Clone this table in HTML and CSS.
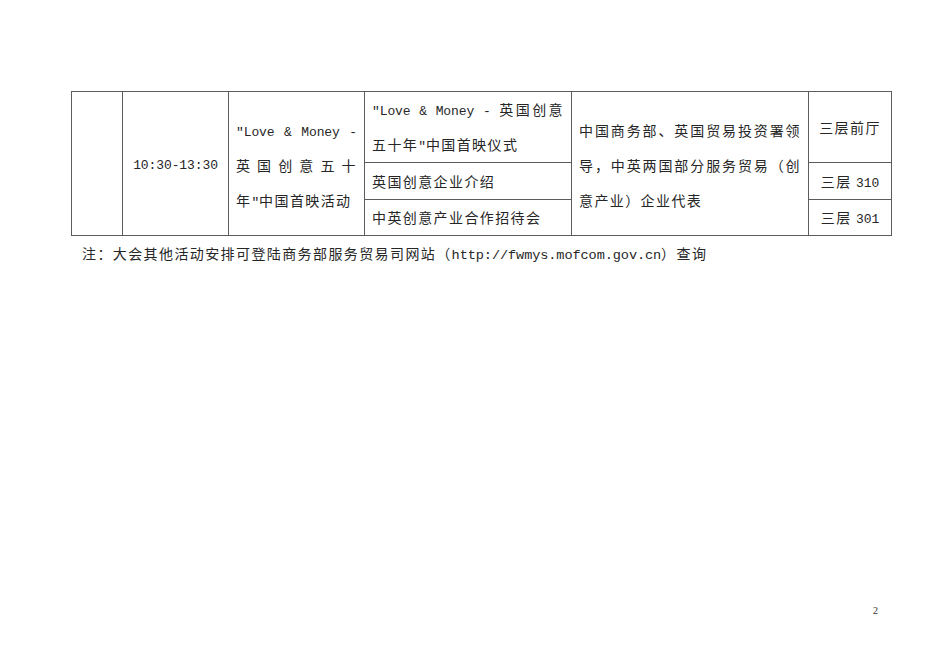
FILE: index.html
```html
<!DOCTYPE html>
<html lang="zh-CN">
<head>
<meta charset="utf-8">
<title>日程</title>
<link rel="stylesheet" href="styles.css">
</head>
<body>
<div class="page">
  <table class="sched">
    <colgroup>
      <col class="c1"><col class="c2"><col class="c3"><col class="c4"><col class="c5"><col class="c6">
    </colgroup>
    <tr class="r1">
      <td rowspan="3"></td>
      <td rowspan="3" class="center"><span class="en">10:30-13:30</span></td>
      <td rowspan="3" class="multi span3">
        <div class="dist"><span class="en">"Love &amp; Money -</span></div>
        <div class="dist">英国创意五十</div>
        <div>年<span class="en">"</span>中国首映活动</div>
      </td>
      <td class="multi">
        <div class="dist"><span class="en">"Love &amp; Money - </span>英国创意</div>
        <div>五十年<span class="en">"</span>中国首映仪式</div>
      </td>
      <td rowspan="3" class="multi span3">
        <div class="dist">中国商务部、英国贸易投资署领</div>
        <div class="dist">导，中英两国部分服务贸易（创</div>
        <div>意产业）企业代表</div>
      </td>
      <td class="center">三层前厅</td>
    </tr>
    <tr class="r2">
      <td>英国创意企业介绍</td>
      <td class="center">三层 <span class="en">310</span></td>
    </tr>
    <tr class="r3">
      <td>中英创意产业合作招待会</td>
      <td class="center">三层 <span class="en">301</span></td>
    </tr>
  </table>
  <p class="note">注：大会其他活动安排可登陆商务部服务贸易司网站（<span class="en url">http://fwmys.mofcom.gov.cn</span>）查询</p>
  <div class="pagenum">2</div>
</div>
</body>
</html>
```

FILE: styles.css
```css
html, body {
  margin: 0;
  padding: 0;
  background: #ffffff;
}

.page {
  width: 950px;
  height: 672px;
  box-sizing: border-box;
  padding: 91px 0 0 71px;
  display: flex;
  flex-direction: column;
  font-family: "Noto Sans CJK SC", "Liberation Serif", sans-serif;
  font-size: 14px;
  letter-spacing: 1.4px;
  color: #262626;
}

.sched {
  border-collapse: collapse;
  table-layout: fixed;
  width: 820px;
}

.c1 { width: 51px; }
.c2 { width: 106px; }
.c3 { width: 136px; }
.c4 { width: 207px; }
.c5 { width: 237px; }
.c6 { width: 83px; }

.sched td {
  border: 1px solid #5c5c5c;
  padding: 0 7px;
  vertical-align: middle;
  line-height: 35px;
  white-space: nowrap;
}

.sched .r1 td { height: 69px; }
.sched .r2 td { height: 36px; }
.sched .r3 td { height: 34px; }

.sched td.multi {
  line-height: 0;
}

.sched td.multi > div {
  height: 35px;
  line-height: 35px;
}

.sched td.span3 {
  padding-top: 3px;
}

.center {
  text-align: center;
}

.dist {
  text-align: justify;
  text-align-last: justify;
}

.en {
  font-family: "Liberation Mono", monospace;
  font-size: 13px;
  line-height: 1;
  letter-spacing: -0.1px;
}

.url {
  font-size: 13.6px;
}

.note {
  margin: 7px 0 0 11px;
  line-height: 20px;
}

.pagenum {
  margin-top: auto;
  margin-bottom: 56px;
  align-self: flex-end;
  margin-right: 72px;
  font-family: "Liberation Serif", serif;
  font-size: 10px;
  letter-spacing: 0;
  color: #333;
}
```
